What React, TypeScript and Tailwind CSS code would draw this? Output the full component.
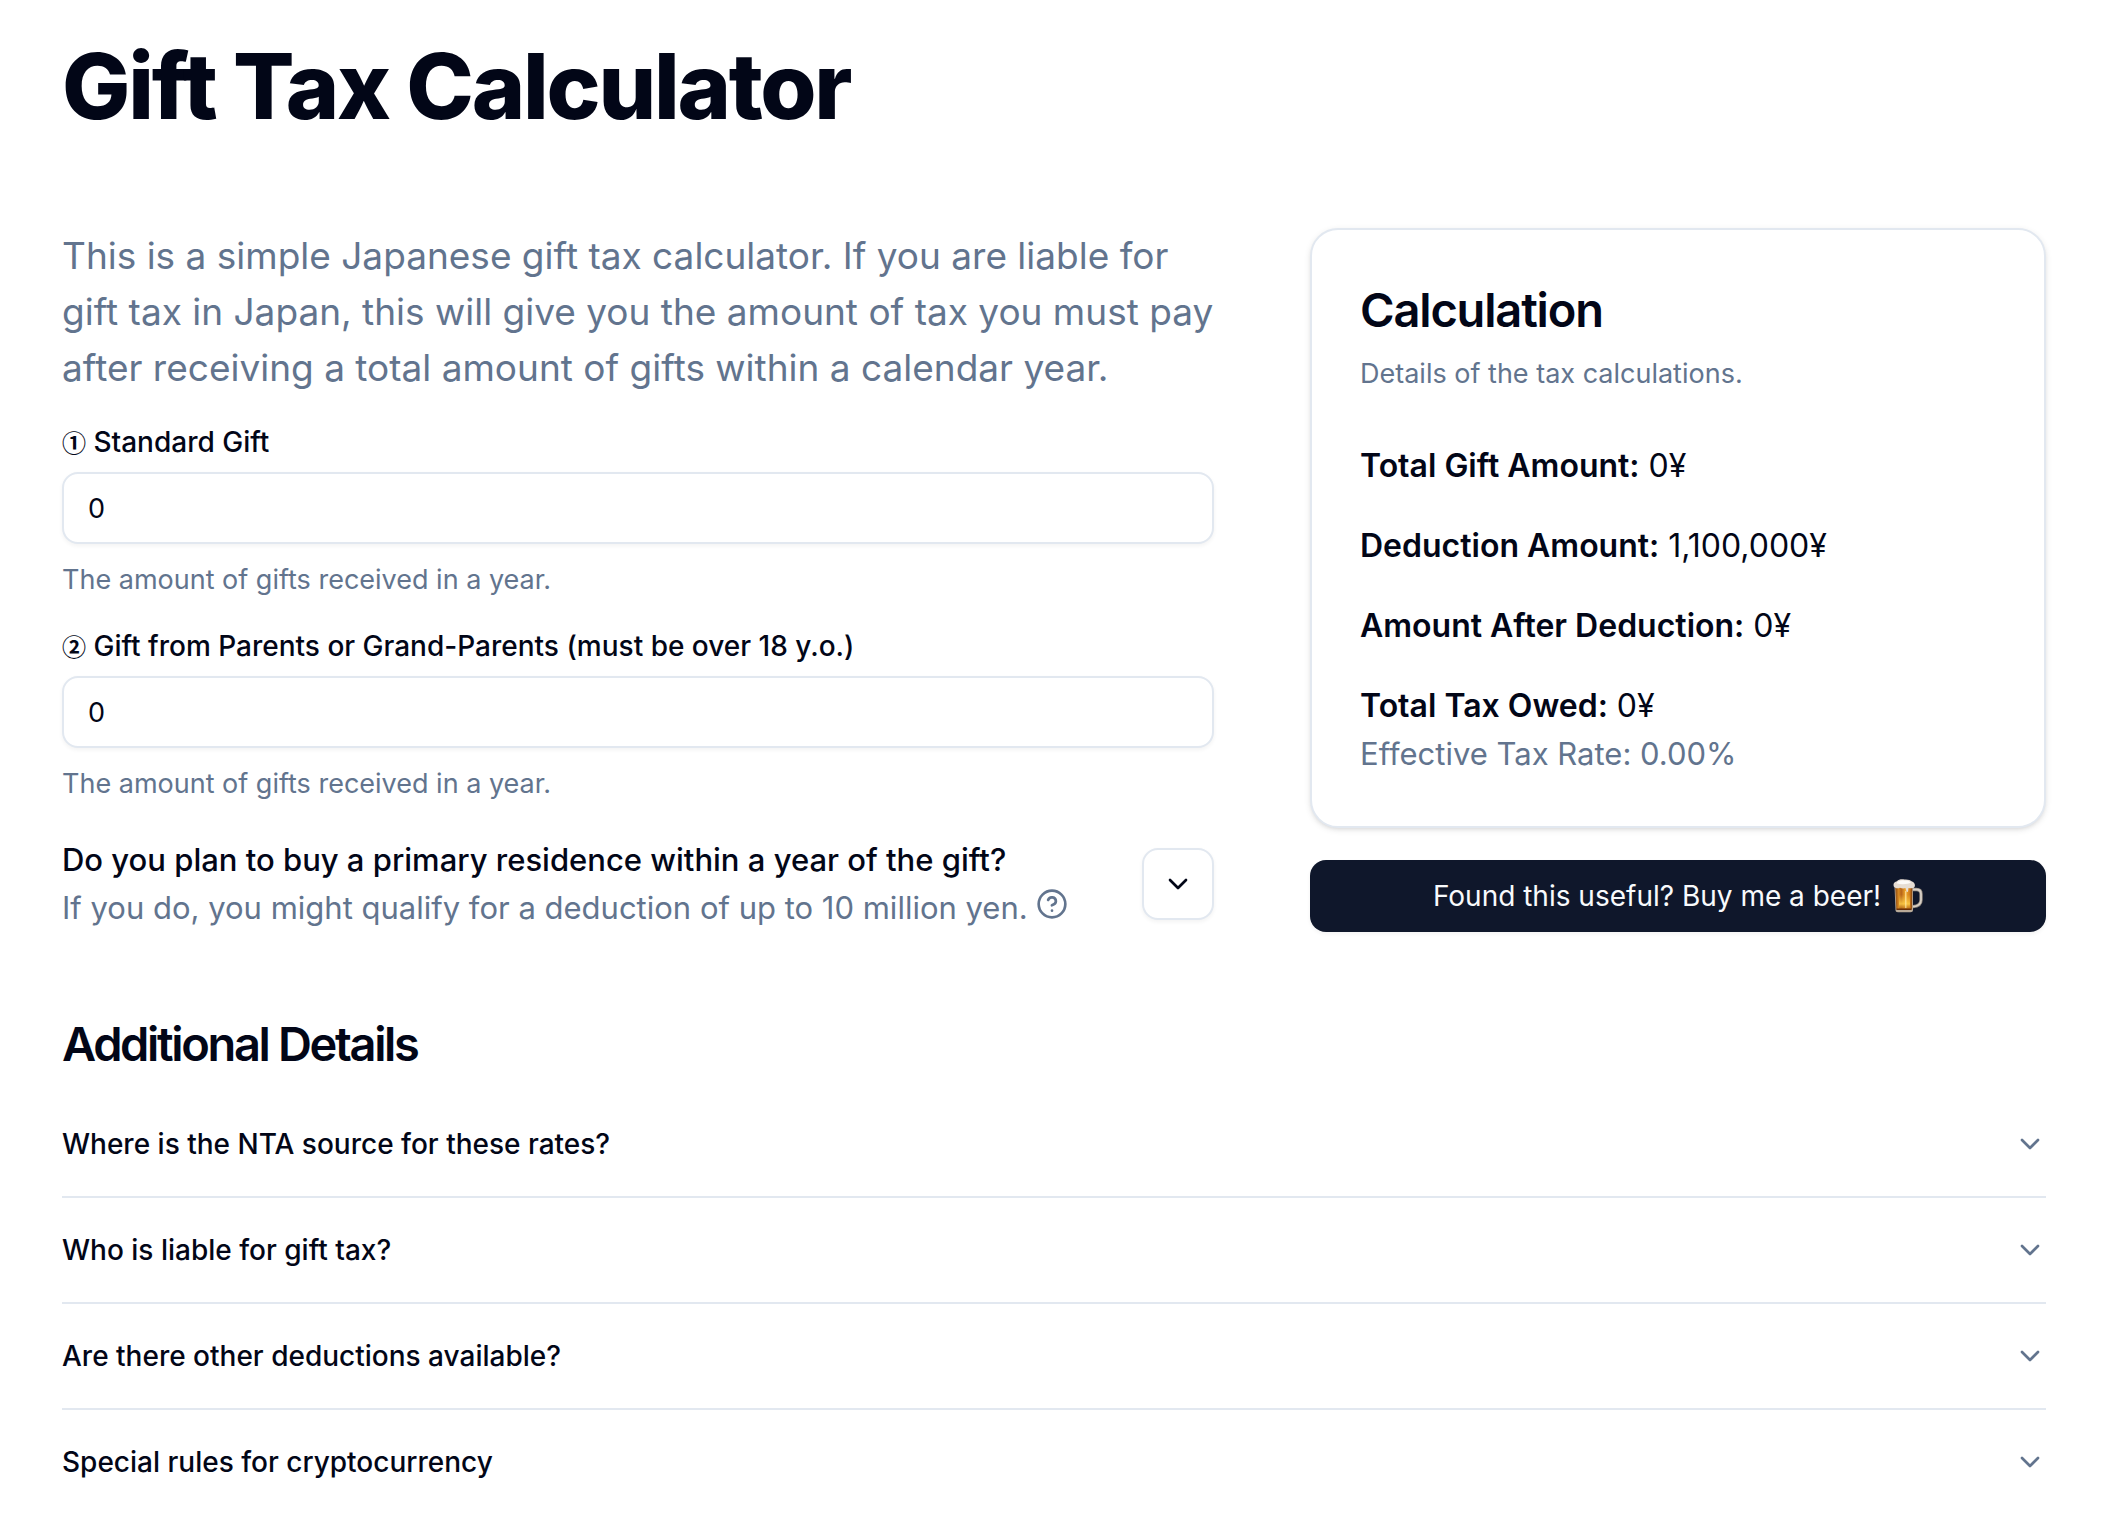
import { useState } from 'react';
import { ChevronDown, CircleHelp } from 'lucide-react';

const BASIC_DEDUCTION = 1100000;

// [taxable amount up to, rate, deduction]
const GENERAL_RATES = [
  [2000000, 0.1, 0],
  [3000000, 0.15, 100000],
  [4000000, 0.2, 250000],
  [6000000, 0.3, 650000],
  [10000000, 0.4, 1250000],
  [15000000, 0.45, 1750000],
  [30000000, 0.5, 2500000],
  [Infinity, 0.55, 4000000],
];

const SPECIAL_RATES = [
  [2000000, 0.1, 0],
  [4000000, 0.15, 100000],
  [6000000, 0.2, 300000],
  [10000000, 0.3, 900000],
  [15000000, 0.4, 1900000],
  [30000000, 0.45, 2650000],
  [45000000, 0.5, 4150000],
  [Infinity, 0.55, 6400000],
];

const QUESTIONS = [
  'Where is the NTA source for these rates?',
  'Who is liable for gift tax?',
  'Are there other deductions available?',
  'Special rules for cryptocurrency',
];

const taxFor = (amount: number, rates: number[][]) => {
  const [, rate, deduction] = rates.find(([limit]) => amount <= limit)!;
  return amount * rate - deduction;
};

const yen = (amount: number) => `${Math.round(amount).toLocaleString('en-US')}¥`;

type GiftFieldProps = {
  id: string;
  mark: string;
  label: string;
  value: string;
  onChange: (value: string) => void;
};

const GiftField = ({ id, mark, label, value, onChange }: GiftFieldProps) => (
  <div className="flex flex-col gap-4">
    <label htmlFor={id} className="text-[28px] leading-7 font-medium">
      <span className="font-['Noto_Sans_CJK_JP',sans-serif] text-2xl leading-7 font-bold">{mark}</span> {label}
    </label>
    <input
      id={id}
      type="text"
      inputMode="numeric"
      value={value}
      onChange={(e) => onChange(e.target.value.replace(/\D/g, ''))}
      className="h-18 w-full rounded-2xl border-2 border-slate-200 bg-white px-6 text-[27px] shadow-[0_2px_4px_rgba(0,0,0,0.05)] outline-none focus:border-slate-400"
    />
    <p className="text-[27px] leading-10 text-slate-500">The amount of gifts received in a year.</p>
  </div>
);

const Amount = ({ label, value }: { label: string; value: string }) => (
  <p className="text-[32px] leading-12">
    <strong className="font-semibold">{label}:</strong> {value}
  </p>
);

const BeerIcon = () => (
  <svg viewBox="0 0 30 34" className="h-[34px] w-[30px]" aria-hidden="true">
    <defs>
      <linearGradient id="beer" x1="0" x2="1" y1="0" y2="0">
        <stop offset="0" stopColor="#8a4a12" />
        <stop offset="0.2" stopColor="#d98a22" />
        <stop offset="0.35" stopColor="#b5631a" />
        <stop offset="0.6" stopColor="#f2a92d" />
        <stop offset="0.85" stopColor="#d07c1c" />
        <stop offset="1" stopColor="#7c3f10" />
      </linearGradient>
      <linearGradient id="glow" x1="0" x2="0" y1="0" y2="1">
        <stop offset="0.2" stopColor="#ffd34a" stopOpacity="0" />
        <stop offset="0.7" stopColor="#ffd34a" stopOpacity="0.8" />
        <stop offset="1" stopColor="#a85a10" stopOpacity="0.6" />
      </linearGradient>
    </defs>
    <path d="M20 10.5h3.5c3 0 4.500 1.800 4.500 4.500v6c0 4-2.500 6.200-8 6.600" fill="none" stroke="#8f867c" strokeWidth="3.400" />
    <path d="M20 10.500h3.500c3 0 4.500 1.800 4.500 4.500v6c0 4-2.500 6.200-8 6.600" fill="none" stroke="#d8d0c6" strokeWidth="1.800" />
    <path d="M1.500 7h18.500v24c0 1.500-1 2.200-2.500 2.200H5c-1.500 0-2.500-.7-2.500-2.200z" fill="#b9aa98" />
    <path d="M2.300 8h17l-.3 22.500H3.300z" fill="url(#beer)" />
    <path d="M6 12h11v18.500H6z" fill="url(#glow)" />
    <path d="M12 12h1.500v17H12z" fill="#fff0b8" opacity="0.6" />
    <path d="M3.500 29.500h15v1.500h-15z" fill="#6b3108" />
    <path d="M.8 7.500C-.2 4.500 1.500 2.500 4 2.200 5.500.4 9-.2 11.500.6c3-.3 6 .4 7.500 2 2 .6 3.300 2.500 2.800 4.600-.3 1.300-1.300 2-2.300 1.800-1.500.6-3 .3-4 0l-.4 3.300c-.2 1-1.500 1-1.700 0L12.500 9c-2 .8-4 .3-5.500-.3C5 9.600 2 9.500.8 7.500z" fill="#e6ddd3" />
    <path d="M3.500 4.200C5 2 8.500 1 11 1.500c3-.3 5.500.3 7 2-3 1.800-10 2.300-14.500.7z" fill="#fcfaf7" />
  </svg>
);

const App = () => {
  const [standard, setStandard] = useState('0');
  const [parents, setParents] = useState('0');
  const [residenceOpen, setResidenceOpen] = useState(false);
  const [openQuestion, setOpenQuestion] = useState<number | null>(null);

  const total = Number(standard) + Number(parents);
  const taxable = Math.max(0, total - BASIC_DEDUCTION);
  const tax =
    total > 0
      ? (taxFor(taxable, GENERAL_RATES) * Number(standard) + taxFor(taxable, SPECIAL_RATES) * Number(parents)) / total
      : 0;
  const rate = total > 0 ? (tax / total) * 100 : 0;

  return (
    <main className="bg-white px-[62px] pt-[38px] pb-4 font-['Inter',sans-serif] text-[#020617]">
      <h1 className="text-[91px] leading-24 font-extrabold tracking-tight">Gift Tax Calculator</h1>

      <div className="mt-[94px] grid grid-cols-5 gap-24">
        <div className="col-span-3 flex flex-col gap-8">
          <p className="text-[37px] leading-14 text-slate-500">
            This is a simple Japanese gift tax calculator. If you are liable for gift tax in Japan, this will give you
            the amount of tax you must pay after receiving a total amount of gifts within a calendar year.
          </p>
          <GiftField id="standard" mark="①" label="Standard Gift" value={standard} onChange={setStandard} />
          <GiftField
            id="parents"
            mark="②"
            label="Gift from Parents or Grand-Parents (must be over 18 y.o.)"
            value={parents}
            onChange={setParents}
          />
          <div className="flex items-center justify-between">
            <div className="text-[31px] leading-12">
              <p className="font-medium">Do you plan to buy a primary residence within a year of the gift?</p>
              <p className="flex items-center gap-2 text-slate-500">
                If you do, you might qualify for a deduction of up to 10 million yen.
                <button type="button" aria-label="About the residence deduction" className="mb-2">
                  <CircleHelp className="size-8" />
                </button>
              </p>
            </div>
            <button
              type="button"
              aria-label="Toggle residence deduction"
              aria-expanded={residenceOpen}
              onClick={() => setResidenceOpen(!residenceOpen)}
              className="flex size-18 items-center justify-center rounded-2xl border-2 border-slate-200 bg-white shadow-[0_2px_4px_rgba(0,0,0,0.05)]"
            >
              <ChevronDown className="size-8" />
            </button>
          </div>
        </div>

        <div className="col-span-2 flex flex-col gap-8">
          <section className="rounded-[28px] border-2 border-slate-200 bg-white p-12 shadow-[0_2px_6px_rgba(0,0,0,0.1),0_2px_4px_-2px_rgba(0,0,0,0.1)]">
            <h2 className="text-[47px] leading-16 font-semibold tracking-tight">Calculation</h2>
            <p className="mt-3 text-[27px] leading-10 text-slate-500">Details of the tax calculations.</p>
            <div className="mt-12 flex flex-col gap-8">
              <Amount label="Total Gift Amount" value={yen(total)} />
              <Amount label="Deduction Amount" value={yen(BASIC_DEDUCTION)} />
              <Amount label="Amount After Deduction" value={yen(taxable)} />
              <div>
                <Amount label="Total Tax Owed" value={yen(tax)} />
                <p className="text-[31px] leading-12 text-slate-500">Effective Tax Rate: {rate.toFixed(2)}%</p>
              </div>
            </div>
          </section>
          <a
            href="#beer"
            className="flex h-18 items-center justify-center gap-3 rounded-2xl bg-slate-900 text-[28px] text-slate-50 shadow-[0_2px_4px_rgba(0,0,0,0.05)]"
          >
            Found this useful? Buy me a beer!
            <BeerIcon />
          </a>
        </div>
      </div>

      <h2 className="mt-20 text-[47px] leading-16 font-semibold tracking-tighter">Additional Details</h2>
      <div className="mt-4 divide-y-2 divide-slate-200">
        {QUESTIONS.map((question, i) => (
          <button
            key={question}
            type="button"
            aria-expanded={openQuestion === i}
            onClick={() => setOpenQuestion(openQuestion === i ? null : i)}
            className="flex w-full items-center justify-between py-8 text-left text-[28px] leading-10 font-medium"
          >
            {question}
            <ChevronDown className="size-8 text-slate-500" />
          </button>
        ))}
      </div>
    </main>
  );
};

export default App;
